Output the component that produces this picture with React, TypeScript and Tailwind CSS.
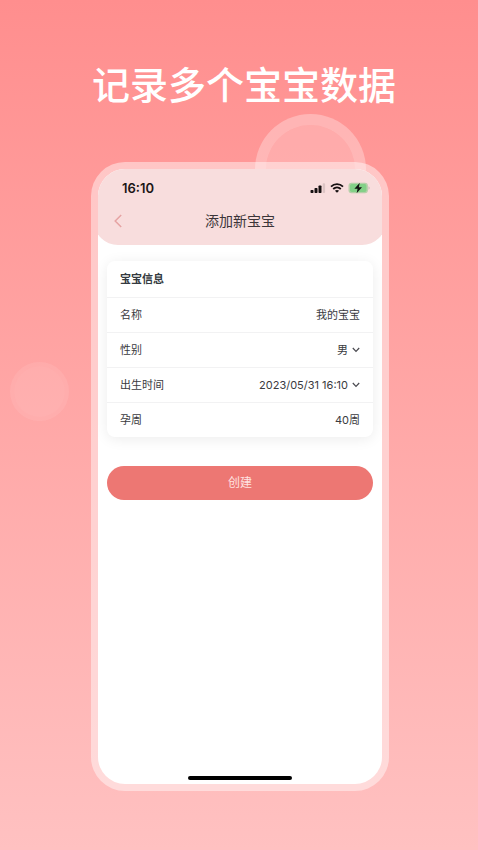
import { useState } from "react";
import type { ReactNode } from "react";

const FONT = "font-['Inter','Noto_Sans_CJK_SC',sans-serif]";

function StatusBar() {
  return (
    <div className="flex items-center justify-between pl-6 pr-3 pt-2">
      <span className="text-[13px] leading-[22px] font-semibold text-[#1c1516]">16:10</span>
      <div className="flex items-center gap-1">
        <svg className="h-3 w-4" viewBox="0 0 16 12" fill="#161011">
          <rect x="0.5" y="8" width="3" height="3" rx="0.8" />
          <rect x="4.5" y="6" width="3" height="5" rx="0.8" />
          <rect x="8.5" y="3.5" width="3" height="7.5" rx="0.8" />
          <rect x="12.7" y="1.3" width="2.4" height="9.7" rx="0.8" fill="#dcc4c4" />
        </svg>
        <svg className="h-3 w-[14px]" viewBox="0 0 14 12" fill="none" stroke="#161011" strokeWidth="1.8">
          <path d="M1 4.6C4.3 1.3 9.7 1.3 13 4.6" />
          <path d="M3.2 7C5.4 4.9 8.6 4.9 10.8 7" />
          <path d="M7 10.8L4.9 8.7C6.1 7.7 7.9 7.7 9.1 8.7Z" fill="#161011" stroke="none" />
        </svg>
        <svg className="h-3 w-[22px]" viewBox="0 0 22 12">
          <rect x="0.5" y="0.7" width="19.4" height="10.6" rx="3" fill="#b5cfa9" />
          <rect x="2" y="2" width="16.4" height="8" rx="1.8" fill="#83d087" />
          <path d="M20.6 4.3C21.8 4.8 21.8 7.2 20.6 7.7Z" fill="#b3a9a2" />
          <path d="M11.8 0.8L6.4 6.7H9.6L8.6 11.2L14 5.2H10.8Z" fill="#111" />
        </svg>
      </div>
    </div>
  );
}

function Chevron() {
  return (
    <svg className="pointer-events-none h-2 w-2 shrink-0" viewBox="0 0 8 8" fill="none" stroke="#4a4a50" strokeWidth="1.2">
      <path d="M0.8 2L4 5.4L7.2 2" />
    </svg>
  );
}

function Row({ id, label, children }: { id: string; label: string; children: ReactNode }) {
  return (
    <div className="flex items-center justify-between gap-3 border-t border-[#f2f2f3] px-[13px] py-2 text-[11px] leading-[18px] text-[#3a3a40]">
      <label htmlFor={id} className="shrink-0">
        {label}
      </label>
      {children}
    </div>
  );
}

export default function App() {
  const [name, setName] = useState("我的宝宝");
  const [gender, setGender] = useState("男");
  const [weeks, setWeeks] = useState("40周");

  return (
    <main
      className={`${FONT} relative flex min-h-screen flex-col overflow-hidden bg-linear-to-b from-[#ff8e8e] to-[#ffc1c1] pt-14 pr-[89px] pb-[59px] pl-[91px]`}
    >
      {/* Background bubbles */}
      <div className="absolute top-[114px] left-[255px] size-[111px] rounded-full border-[11px] border-white/30 bg-white/20 bg-clip-padding" />
      <div className="absolute top-[362px] left-[10px] size-[59px] rounded-full border-4 border-white/8 bg-white/10 bg-clip-padding" />

      <h1 className="-mx-10 pl-2 text-center text-[38px] leading-[58px] font-medium text-white">记录多个宝宝数据</h1>

      {/* Phone */}
      <section className="relative mt-12 flex flex-1 flex-col rounded-[34px] bg-white/45 p-[7px]">
        <div className="flex flex-1 flex-col overflow-hidden rounded-[27px] bg-white">
          <header className="-mx-1 rounded-b-[24px] bg-[#f8dddd] px-1 pb-3">
            <StatusBar />
            <div className="grid grid-cols-[40px_1fr_40px] items-center pt-[10px]">
              <button type="button" aria-label="返回" className="flex h-6 items-center pl-4">
                <svg className="h-[14px] w-2" viewBox="0 0 8 14" fill="none" stroke="#e6a3a3" strokeWidth="1.5">
                  <path d="M7.2 1L1.2 7L7.2 13" />
                </svg>
              </button>
              <h2 className="text-center text-[14px] leading-6 text-[#3c3539]">添加新宝宝</h2>
            </div>
          </header>

          <form className="flex flex-col px-[9px] pt-4" onSubmit={(e) => e.preventDefault()}>
            <div className="rounded-lg bg-white shadow-[0_2px_14px_rgba(0,0,0,0.08)]">
              <h3 className="px-[13px] py-[9px] text-[11px] leading-[18px] font-bold text-[#343a40]">宝宝信息</h3>
              <Row id="name" label="名称">
                <input
                  id="name"
                  value={name}
                  onChange={(e) => setName(e.target.value)}
                  className="min-w-0 flex-1 bg-transparent text-right outline-none"
                />
              </Row>
              <Row id="gender" label="性别">
                <div className="flex flex-1 items-center">
                  <select
                    id="gender"
                    value={gender}
                    onChange={(e) => setGender(e.target.value)}
                    className="-mr-2 flex-1 appearance-none bg-transparent pr-3 text-right outline-none"
                  >
                    <option>男</option>
                    <option>女</option>
                  </select>
                  <Chevron />
                </div>
              </Row>
              <Row id="birth" label="出生时间">
                <button id="birth" type="button" className="flex items-center gap-1">
                  2023/05/31 16:10
                  <Chevron />
                </button>
              </Row>
              <Row id="weeks" label="孕周">
                <input
                  id="weeks"
                  value={weeks}
                  onChange={(e) => setWeeks(e.target.value)}
                  className="min-w-0 flex-1 bg-transparent text-right outline-none"
                />
              </Row>
            </div>

            <button
              type="submit"
              className="mt-[29px] rounded-full bg-[#ed7773] py-2 text-[12px] leading-[18px] text-[#ffe3e1]"
            >
              创建
            </button>
          </form>

          <div className="mx-auto mt-auto mb-1 h-1 w-[104px] rounded-full bg-black" />
        </div>
      </section>
    </main>
  );
}
